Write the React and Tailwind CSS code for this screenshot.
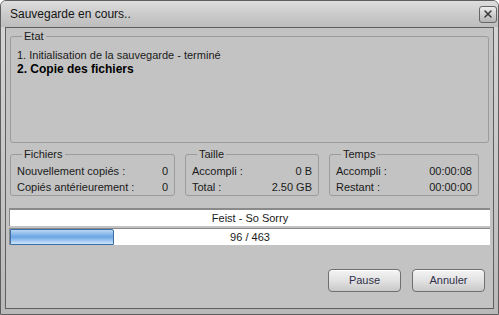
import { X } from "lucide-react"

const font = { fontFamily: '"Liberation Sans", Arial, sans-serif' }

function Group({ label, className, children }) {
  return (
    <fieldset className={"border border-[#9b9b9b] rounded-[3px] " + className}>
      <legend className="ml-[5px] px-[2px] text-[11px] leading-[13px] text-[#1a1a1a]">{label}</legend>
      {children}
    </fieldset>
  )
}

function Row({ label, value }) {
  return (
    <div className="flex justify-between h-[16px] items-center">
      <span>{label}</span>
      <span>{value}</span>
    </div>
  )
}

function Button({ children }) {
  return (
    <button className="w-[73px] h-[23px] rounded-[4px] border border-[#6f6f6f] bg-gradient-to-b from-[#f4f4f4] via-[#e2e2e2] to-[#c9c9c9] text-[11px] text-[#30304a] shadow-[inset_0_1px_0_#ffffff]">
      {children}
    </button>
  )
}

export default function App() {
  return (
    <div className="w-[499px] h-[315px] bg-white" style={font}>
      <div className="w-full h-full flex flex-col rounded-t-[6px] border border-[#5e5e5e] bg-gradient-to-b from-[#d6d6d6] to-[#b9b9b9] overflow-hidden">
        <div className="h-[26px] flex items-center justify-between pl-[9px] pr-[1px] bg-gradient-to-b from-[#dedede] via-[#cbcbcb] to-[#bdbdbd]">
          <span className="text-[12px] text-[#151515]">Sauvegarde en cours..</span>
          <div className="w-[18px] h-[17px] rounded-[3px] border border-[#666] bg-gradient-to-b from-[#ececec] to-[#b4b4b4] flex items-center justify-center">
            <X size={12} strokeWidth={3} className="text-[#3a3a3a]" />
          </div>
        </div>
        <div className="flex-1 mx-[4px] mb-[5px] border border-[#5f5f5f] bg-[#c3c3c3] flex flex-col px-[4px] pt-[2px] text-[11px] text-[#1a1a1a]">
          <Group label="Etat" className="h-[113px] pl-[6px] pr-[6px]">
            <div className="leading-[14px] mt-[5px]">1. Initialisation de la sauvegarde - terminé</div>
            <div className="leading-[14px] text-[12px] font-bold text-black">2. Copie des fichiers</div>
          </Group>
          <div className="flex gap-[10px] mt-[5px]">
            <Group label="Fichiers" className="w-[165px] h-[48px] px-[6px] pt-[2px]">
              <Row label="Nouvellement copiés :" value="0" />
              <Row label="Copiés antérieurement :" value="0" />
            </Group>
            <Group label="Taille" className="w-[134px] h-[48px] px-[6px] pt-[2px]">
              <Row label="Accompli :" value="0 B" />
              <Row label="Total :" value="2.50 GB" />
            </Group>
            <Group label="Temps" className="w-[150px] h-[48px] px-[6px] pt-[2px]">
              <Row label="Accompli :" value="00:00:08" />
              <Row label="Restant :" value="00:00:00" />
            </Group>
          </div>
          <div className="mt-[12px] -mx-[1px] flex flex-col gap-[2px]">
            <div className="h-[18px] bg-white border-t-2 border-l border-[#8a8a8a] flex items-center justify-center">
              Feist - So Sorry
            </div>
            <div className="relative h-[17px] bg-white border-t border-l border-[#8a8a8a] flex items-center justify-center">
              <div className="absolute left-0 top-0 h-full w-[104px] border border-[#3c6ea6] rounded-tr-[2px] bg-gradient-to-b from-[#b9d8f5] via-[#6aa5e3] to-[#cfe6fb]" />
              <span className="relative">96 / 463</span>
            </div>
          </div>
          <div className="flex justify-end gap-[11px] mt-[24px] pr-[4px]">
            <Button>Pause</Button>
            <Button>Annuler</Button>
          </div>
        </div>
      </div>
    </div>
  )
}
